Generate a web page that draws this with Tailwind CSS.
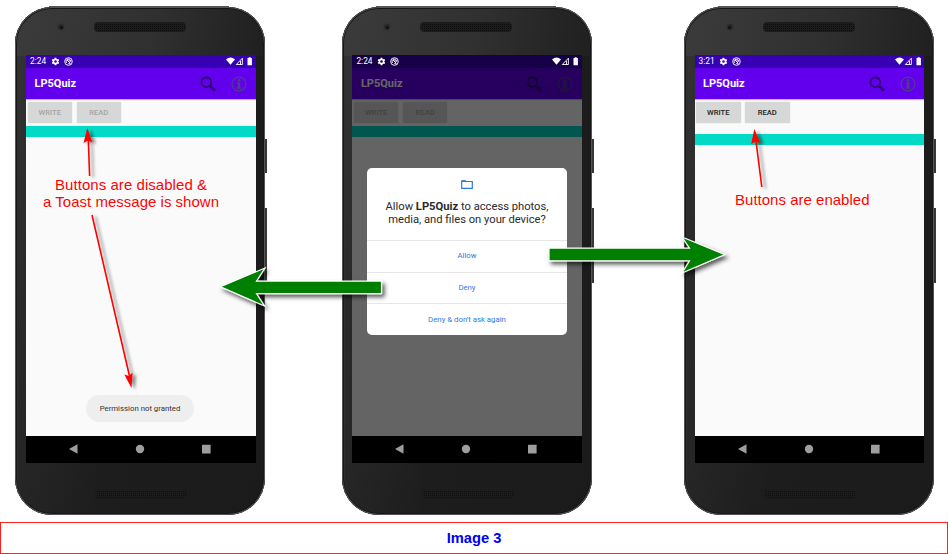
<!DOCTYPE html>
<html lang="en">
<head>
<meta charset="utf-8">
<title>LP5Quiz permissions</title>
<script src="https://cdn.jsdelivr.net/npm/@tailwindcss/browser@4"></script>
</head>
<body class="bg-white w-[948px] h-[554px] overflow-hidden font-[Roboto,sans-serif]">
<svg class="absolute w-0 h-0">
  <symbol id="gear" viewBox="0 0 24 24"><path fill="#fff" d="M19.4 13a7.500 7.500 0 0 0 0-2l2.100-1.600a.5.5 0 0 0 .1-.6l-2-3.500a.5.5 0 0 0-.6-.2l-2.500 1a7.300 7.300 0 0 0-1.700-1l-.4-2.700a.5.5 0 0 0-.5-.4h-4a.5.5 0 0 0-.5.4L9 5.100a7.700 7.700 0 0 0-1.700 1l-2.500-1a.5.5 0 0 0-.6.2l-2 3.500a.5.5 0 0 0 .1.6L4.500 11a8 8 0 0 0 0 2l-2.100 1.600a.5.5 0 0 0-.1.6l2 3.500c.1.2.4.300.6.2l2.500-1a7.300 7.300 0 0 0 1.700 1l.4 2.700c0 .2.2.4.5.4h4c.3 0 .5-.2.5-.4l.4-2.700a7.700 7.700 0 0 0 1.700-1l2.500 1c.2.1.5 0 .6-.2l2-3.500a.5.5 0 0 0-.1-.6zM12 15.500a3.500 3.500 0 1 1 0-7 3.500 3.500 0 0 1 0 7z"/></symbol>
  <symbol id="target" viewBox="0 0 16 16"><g fill="none" stroke="#fff"><circle cx="8" cy="8" r="6.800" stroke-width="1.600"/><path d="M4.500 10.500A4.300 4.300 0 1 1 12.200 9M5 5l6.500 6.500M7.500 11.800h3M8 5.500a2.300 2.300 0 0 1 2 2.500" stroke-width="1.700"/></g></symbol>
  <symbol id="signals" viewBox="0 0 26 9"><path fill="#fff" d="M0 2.400Q4.500-1.200 9 2.400L4.500 7.800zM21.500 1h1.200V.2h2V1h1.200v7.300h-4.400z"/><path fill="none" stroke="#fff" stroke-width=".9" d="M10.300 7.500 16.400 1.200V7.500zM14.500 4V7.400"/></symbol>
  <symbol id="search" viewBox="0 0 16 16"><circle cx="6.300" cy="6.200" r="4.800" fill="none" stroke="currentColor" stroke-width="2.100"/><path d="m9.800 9.800 5.200 5" stroke="currentColor" stroke-width="2.800"/></symbol>
  <symbol id="info" viewBox="0 0 16 16"><circle cx="8" cy="8" r="6.900" fill="none" stroke="currentColor" stroke-width="1.100"/><circle cx="8" cy="4.200" r="1.250" fill="currentColor"/><path d="M5.800 6.300h3.400v5.300h1.200v1.100H5.700v-1.100h1.200V7.400H5.800z" fill="currentColor"/></symbol>
  <symbol id="nav" viewBox="0 0 230 27"><g fill="#9e9e9e"><path d="M43 13 51.500 8.300v9.400z"/><circle cx="114" cy="13" r="4.200"/><rect x="176" y="8.800" width="8.600" height="8.600" rx=".5"/></g></symbol>
  <pattern id="mesh" width="2" height="2" patternUnits="userSpaceOnUse"><rect width="2" height="2" fill="#1c1c1c"/><rect width="1" height="1" fill="#0d0d0d"/></pattern>
</svg>

<main class="relative flex h-[522px] pt-[6px] pl-[15px]" id="stage"></main>
<footer class="h-8 border border-[#ff2020] flex items-center justify-center text-[#0000ee] font-bold text-[14.700px] font-['Liberation_Sans',Arial,sans-serif]"><span class="pt-px">Image 3</span></footer>

<script>
const phones = [
  { time: '2:24', enabled: false, toast: true, frame: 'pl-[11px]', gap: 'mr-[77px]', teal: 'mt-[3px]' },
  { time: '2:24', enabled: false, dialog: true, frame: 'pl-[10.400px]', gap: 'mr-[92px]', teal: 'mt-[3px]' },
  { time: '3:21', enabled: true, frame: 'pl-[10.500px]', gap: '', teal: 'mt-[11px]' },
];
const grille = `<svg class="w-[92px] h-[10px]" viewBox="0 0 92 10"><rect x=".5" y=".5" width="91" height="9" rx="3.500" fill="url(#mesh)" stroke="#1b1b1b"/></svg>`;
const button = (t, on) => `<div class="w-[44.500px] h-[20.500px] rounded-[1.500px] bg-[#d6d8d7] shadow-[0_0_1px_#bbb] flex items-center justify-center text-[7.600px] font-medium ${on ? 'text-[#222]' : 'text-[#a4a5a5]'}"><span class="pt-px">${t}</span></div>`;
const dialog = `<div class="absolute left-[14.600px] top-[113px] w-[200px] h-[167.300px] rounded-[5px] bg-white text-center flex flex-col">
  <div class="h-[72px] flex flex-col items-center pt-[12px]">
    <svg class="w-3 h-[9px]" viewBox="0 0 12 9"><path d="M.7 1.500V8.300h10.600V1.500zM.7 1.100h4" fill="none" stroke="#2878e8" stroke-width="1.200"/><path d="M.2.300h4.300l1 1.300H.2z" fill="#2878e8"/></svg>
    <p class="mt-[11px] text-[11.200px] leading-[13px] text-[#2a2a2a] whitespace-nowrap">Allow <b>LP5Quiz</b> to access photos,<br>media, and files on your device?</p>
  </div>
  <div class="h-8 border-t border-[#e6e6e6] flex items-center justify-center text-[7.700px] text-[#2f78e4]">Allow</div>
  <div class="h-8 border-t border-[#e6e6e6] flex items-center justify-center text-[7.700px] text-[#2f78e4]">Deny</div>
  <div class="h-[32px] border-t border-[#e6e6e6] flex items-center justify-center text-[7.800px] text-[#2f78e4]">Deny &amp; don't ask again</div>
</div>`;
const phone = p => `<section class="relative shrink-0 w-[250px] h-[509px] ${p.gap}">
  <div class="absolute left-[248px] top-[133px] w-1 h-[34px] bg-[#373737]"></div>
  <div class="absolute left-[248px] top-[202px] w-[3.500px] h-[75px] bg-[#373737]"></div>
  <div class="absolute left-[34px] top-0 w-[180px] h-2 bg-[#555]"></div>
  <div class="absolute left-[39px] top-[501px] w-[166px] h-2 bg-[#0b0b0b]"></div>
  <div class="relative mt-px h-[507.500px] w-[249.500px] rounded-t-[37px] rounded-b-[37px] bg-[linear-gradient(100deg,#353535_0%,#292929_18%,#1d1d1d_50%,#1b1b1b_100%)] shadow-[inset_0_0_0_1px_#555,inset_0_0_0_2px_#161616,inset_3px_0_1px_#303030] ${p.frame}">
    <div class="absolute inset-x-[2px] top-[2px] h-[47px] rounded-t-[35px] bg-[linear-gradient(100deg,#3b3b3b,#303030_55%,#202020)]"></div>
    <div class="relative h-12 flex items-start pt-[15px]">
      <div class="ml-[31px] mt-px w-[8px] h-[8px] rounded-full bg-[#272727] border border-[#373337] flex items-center justify-center"><i class="block w-[3px] h-[3px] rounded-full bg-[#151018]"></i></div>
      <div class="ml-[29px]">${grille}</div>
    </div>
    <div class="relative w-[229.500px] h-[407.500px] bg-[#fafafa] flex flex-col overflow-hidden">
      <div class="h-[13px] shrink-0 bg-[#3700b3]"></div>
      <div class="h-[31px] shrink-0 bg-[#6200ee] flex items-center pl-[8.500px] text-white font-bold text-[11px] shadow-[0_1px_1px_#bbb]">
        <span class="pt-[2px]">LP5Quiz</span>
        <svg class="ml-auto w-4 h-4 text-[#33007d]"><use href="#search"/></svg>
        <svg class="ml-[15px] mr-[8.500px] w-4 h-4 text-[#4f3f85]"><use href="#info"/></svg>
      </div>
      <div class="flex gap-[4.500px] pt-[3.300px] pl-[1.500px]">${button('WRITE', p.enabled)}${button('READ', p.enabled)}</div>
      <div class="${p.teal} h-[10.900px] shrink-0 bg-[#03dac5]"></div>
      ${p.toast ? '<div class="absolute left-[60px] top-[340px] w-[108px] h-[27px] rounded-full bg-[#eee] flex items-center justify-center text-[7.800px] text-[#333]">Permission not granted</div>' : ''}
      ${p.dialog ? '<div class="absolute inset-0 bg-black/60"></div>' + dialog : ''}
      <div class="absolute inset-x-0 top-0 h-[13px] flex items-center pl-[4px] text-white text-[8.400px]">
        <span class="w-[20.500px]">${p.time}</span>
        <svg class="w-[9px] h-[9px]"><use href="#gear"/></svg>
        <svg class="ml-[4px] w-[9px] h-[9px]"><use href="#target"/></svg>
        <svg class="ml-auto mr-[3.500px] w-[26px] h-[9px]"><use href="#signals"/></svg>
      </div>
      <div class="relative mt-auto h-[27px] shrink-0 bg-black"><svg class="w-[230px] h-[27px]"><use href="#nav"/></svg></div>
    </div>
    <div class="absolute left-[79.500px] top-[482px]">${grille}</div>
  </div>
</section>`;
document.getElementById('stage').innerHTML = phones.map(phone).join('') + `
<svg class="absolute left-0 top-0 w-[948px] h-[522px] pointer-events-none" viewBox="0 0 948 522">
  <defs>
    <filter id="sh" x="-30%" y="-30%" width="160%" height="180%"><feDropShadow dx="2.500" dy="3" stdDeviation="2" flood-opacity=".65"/></filter>
    <filter id="thin" filterUnits="userSpaceOnUse" x="0" y="0" width="948" height="522"><feDropShadow dx="3.500" dy="1.500" stdDeviation="1.800" flood-opacity=".45"/></filter>
  </defs>
  <g fill="#008000" stroke="#fff" stroke-width="1.200" filter="url(#sh)">
    <path d="M220.500 286.800 265 268 256.500 281.100H381.500V293.600H256.500L264.500 306z"/>
    <path d="M725 254.600 682 237 689.500 248.100H549V260.800H689.500L682 273z"/>
  </g>
  <g fill="red" stroke="red" filter="url(#thin)">
    <path d="M89.600 176 88.300 139M92 215 129.500 376M761.800 187 756 141" stroke-width="1.600" fill="none"/>
    <path stroke="none" d="M87.300 128 92.500 142.500 88.200 140.500 83.500 143zM131.500 388 124.300 374.500 128.800 376 132.600 372.600zM754.300 129 760.500 143 755.800 141.600 751.200 144z"/>
  </g>
  <g font-family="Liberation Sans, Arial, sans-serif" font-size="15" fill="red" stroke="#fff" stroke-width="2" paint-order="stroke">
    <text x="55" y="190" textLength="152" lengthAdjust="spacing">Buttons are disabled &amp;</text>
    <text x="43" y="206.500" textLength="176" lengthAdjust="spacing">a Toast message is shown</text>
    <text x="735" y="205" textLength="134.500" lengthAdjust="spacing">Buttons are enabled</text>
  </g>
</svg>`;
</script>
</body>
</html>
